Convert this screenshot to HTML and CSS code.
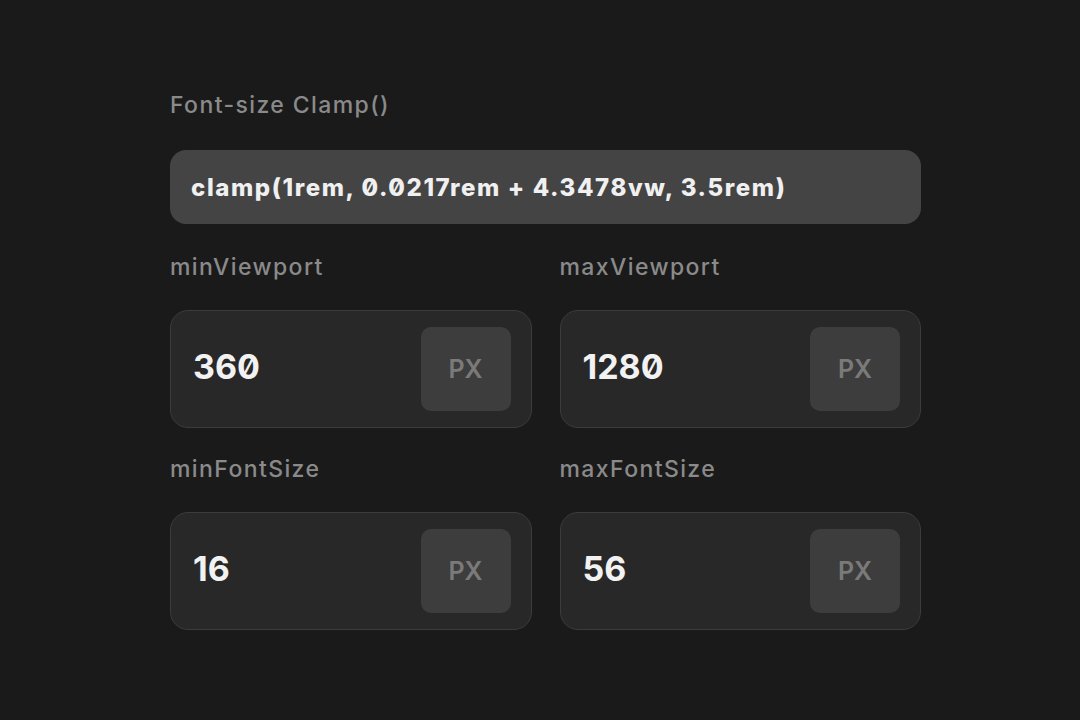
FILE: index.html
```html
<!DOCTYPE html>
<html>
<head>
<meta charset="utf-8">
<link rel="stylesheet" href="styles.css">
</head>
<body>
<main class="panel">
  <div class="label">Font-size Clamp()</div>
  <div class="code">clamp(1rem, 0.0217rem + 4.3478vw, 3.5rem)</div>
  <div class="grid">
    <div class="field">
      <div class="label">minViewport</div>
      <div class="input"><span class="value">360</span><span class="unit">PX</span></div>
    </div>
    <div class="field">
      <div class="label">maxViewport</div>
      <div class="input"><span class="value">1280</span><span class="unit">PX</span></div>
    </div>
    <div class="field">
      <div class="label">minFontSize</div>
      <div class="input"><span class="value">16</span><span class="unit">PX</span></div>
    </div>
    <div class="field">
      <div class="label">maxFontSize</div>
      <div class="input"><span class="value">56</span><span class="unit">PX</span></div>
    </div>
  </div>
</main>
</body>
</html>
```
FILE: styles.css
```css
html, body {
  margin: 0;
  padding: 0;
  background: #1a1a1a;
  width: 1080px;
  height: 720px;
  overflow: hidden;
}
body {
  font-family: Inter, "Liberation Sans", sans-serif;
  font-feature-settings: "zero" 1;
}
.panel {
  width: 751px;
  margin-left: 170px;
  padding-top: 90px;
  display: flex;
  flex-direction: column;
}
.label {
  font-size: 23px;
  line-height: 30px;
  height: 30px;
  font-weight: 500;
  color: #8a8a8a;
  letter-spacing: 1.4px;
}
.code {
  margin-top: 30px;
  height: 74px;
  box-sizing: border-box;
  background: #444444;
  border-radius: 16px;
  padding-left: 21px;
  display: flex;
  align-items: center;
  color: #f0f0f0;
  font-weight: 800;
  font-size: 24px;
  letter-spacing: 1.6px;
}
.grid {
  margin-top: 28px;
  display: grid;
  grid-template-columns: 1fr 1fr;
  column-gap: 28px;
  row-gap: 26px;
}
.field {
  display: flex;
  flex-direction: column;
  gap: 28px;
}
.input {
  height: 118px;
  box-sizing: border-box;
  border: 1.5px solid #3c3c3c;
  background: #282828;
  border-radius: 18px;
  display: flex;
  align-items: center;
  justify-content: space-between;
  padding: 0 20px 0 22px;
}
.value {
  color: #f2f2f2;
  font-weight: 700;
  font-size: 34px;
  margin-top: -6px;
}
.unit {
  width: 90px;
  height: 84px;
  border-radius: 10px;
  background: #3d3d3d;
  color: #7a7a7a;
  font-size: 25px;
  font-weight: 600;
  display: flex;
  align-items: center;
  justify-content: center;
}
```
